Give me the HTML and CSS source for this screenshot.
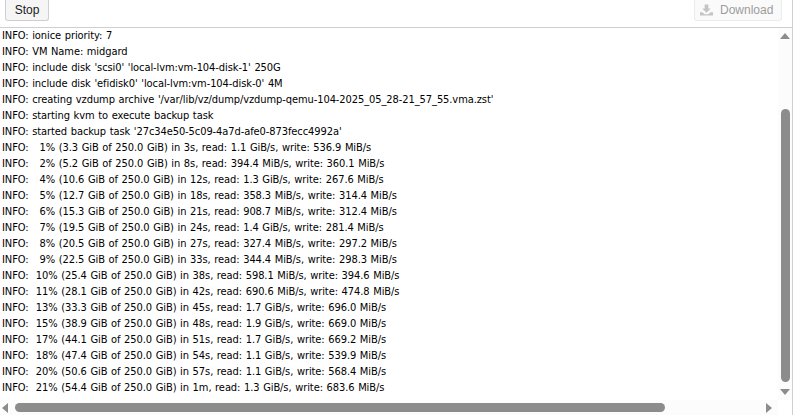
FILE: index.html
```html
<!DOCTYPE html>
<html lang="en">
<head>
<meta charset="utf-8">
<title>Task viewer</title>
<link rel="stylesheet" href="styles.css">
</head>
<body>
<div class="panel">
  <div class="toolbar">
    <button class="btn">Stop</button>
    <button class="btn btn-disabled"><svg class="dl" viewBox="0 0 14 12" width="13" height="12"><path d="M5 0h4v4.500h2.500L7 9 2.500 4.500H5z"/><path d="M0 8.500h2.500L5 10.500h4l2.500-2h2.500V12H0z"/></svg>Download</button>
  </div>
  <div class="viewer">
    <pre class="log">INFO: ionice priority: 7
INFO: VM Name: midgard
INFO: include disk 'scsi0' 'local-lvm:vm-104-disk-1' 250G
INFO: include disk 'efidisk0' 'local-lvm:vm-104-disk-0' 4M
INFO: creating vzdump archive '/var/lib/vz/dump/vzdump-qemu-104-2025_05_28-21_57_55.vma.zst'
INFO: starting kvm to execute backup task
INFO: started backup task '27c34e50-5c09-4a7d-afe0-873fecc4992a'
INFO:   1% (3.3 GiB of 250.0 GiB) in 3s, read: 1.1 GiB/s, write: 536.9 MiB/s
INFO:   2% (5.2 GiB of 250.0 GiB) in 8s, read: 394.4 MiB/s, write: 360.1 MiB/s
INFO:   4% (10.6 GiB of 250.0 GiB) in 12s, read: 1.3 GiB/s, write: 267.6 MiB/s
INFO:   5% (12.7 GiB of 250.0 GiB) in 18s, read: 358.3 MiB/s, write: 314.4 MiB/s
INFO:   6% (15.3 GiB of 250.0 GiB) in 21s, read: 908.7 MiB/s, write: 312.4 MiB/s
INFO:   7% (19.5 GiB of 250.0 GiB) in 24s, read: 1.4 GiB/s, write: 281.4 MiB/s
INFO:   8% (20.5 GiB of 250.0 GiB) in 27s, read: 327.4 MiB/s, write: 297.2 MiB/s
INFO:   9% (22.5 GiB of 250.0 GiB) in 33s, read: 344.4 MiB/s, write: 298.3 MiB/s
INFO:  10% (25.4 GiB of 250.0 GiB) in 38s, read: 598.1 MiB/s, write: 394.6 MiB/s
INFO:  11% (28.1 GiB of 250.0 GiB) in 42s, read: 690.6 MiB/s, write: 474.8 MiB/s
INFO:  13% (33.3 GiB of 250.0 GiB) in 45s, read: 1.7 GiB/s, write: 696.0 MiB/s
INFO:  15% (38.9 GiB of 250.0 GiB) in 48s, read: 1.9 GiB/s, write: 669.0 MiB/s
INFO:  17% (44.1 GiB of 250.0 GiB) in 51s, read: 1.7 GiB/s, write: 669.2 MiB/s
INFO:  18% (47.4 GiB of 250.0 GiB) in 54s, read: 1.1 GiB/s, write: 539.9 MiB/s
INFO:  20% (50.6 GiB of 250.0 GiB) in 57s, read: 1.1 GiB/s, write: 568.4 MiB/s
INFO:  21% (54.4 GiB of 250.0 GiB) in 1m, read: 1.3 GiB/s, write: 683.6 MiB/s</pre>
    <div class="vbar">
      <span class="arrow up"></span>
      <span class="vtrack"><span class="vthumb"></span></span>
      <span class="arrow down"></span>
    </div>
    <div class="hbar">
      <span class="arrow left"></span>
      <span class="htrack"><span class="hthumb"></span></span>
      <span class="arrow right"></span>
    </div>
    <div class="corner"></div>
  </div>
</div>
</body>
</html>
```
FILE: styles.css
```css
html, body { margin: 0; padding: 0; background: #fff; height: 100%; overflow: hidden; }
body { font-family: "Liberation Sans", sans-serif; color: #000; }
.panel { width: 792px; height: 415px; border-right: 1px solid #cfcfcf; display: flex; flex-direction: column; }
.toolbar { height: 27px; border-bottom: 1px solid #cfcfcf; display: flex; justify-content: space-between; align-items: flex-start; padding: 0 10px 0 5px; }
.btn { height: 21px; width: 44px; padding: 0; margin: 0; background: #f5f5f5; border: 1px solid #cfcfcf; border-top: 0; border-radius: 0 0 3px 3px; font: 12px/20px "Liberation Sans", sans-serif; color: #1a1a1a; display: flex; align-items: center; justify-content: center; gap: 7px; }
.btn-disabled { width: 88px; justify-content: flex-start; padding-left: 5px; color: #9c9c9c; background: #fafafa; border-color: #ececec; }
.dl { fill: #c4c4c4; }
.viewer { flex: 1; min-height: 0; display: grid; grid-template-columns: 1fr 14px; grid-template-rows: 1fr 15px; }
.log { margin: 0; padding: 0 0 0 2px; font: 11px/16px "DejaVu Sans", sans-serif; font-stretch: condensed; letter-spacing: -0.08px; word-spacing: 0.6px; white-space: pre; overflow: hidden; color: #000; }
.vbar { background: #fcfcfc; display: flex; flex-direction: column; align-items: center; padding-top: 5px; }
.hbar { background: #fcfcfc; display: flex; align-items: center; padding-left: 2px; }
.corner { background: #fff; }
.vtrack { flex: 1; display: flex; flex-direction: column; width: 100%; align-items: center; }
.vthumb { display: block; width: 9px; margin-top: 70px; height: 273px; background: #8c8c8c; border-radius: 5px; }
.htrack { flex: 1; display: flex; align-items: center; }
.hthumb { display: block; width: 650px; height: 9px; margin-left: 7px; background: #8c8c8c; border-radius: 5px; }
.arrow { display: block; width: 0; height: 0; flex: none; }
.up { border-left: 5px solid transparent; border-right: 5px solid transparent; border-bottom: 6px solid #8c8c8c; }
.down { border-left: 5px solid transparent; border-right: 5px solid transparent; border-top: 6px solid #8c8c8c; margin-bottom: 5px; }
.left { border-top: 5px solid transparent; border-bottom: 5px solid transparent; border-right: 6px solid #8c8c8c; }
.right { border-top: 5px solid transparent; border-bottom: 5px solid transparent; border-left: 6px solid #8c8c8c; margin-right: 6px; }
```
